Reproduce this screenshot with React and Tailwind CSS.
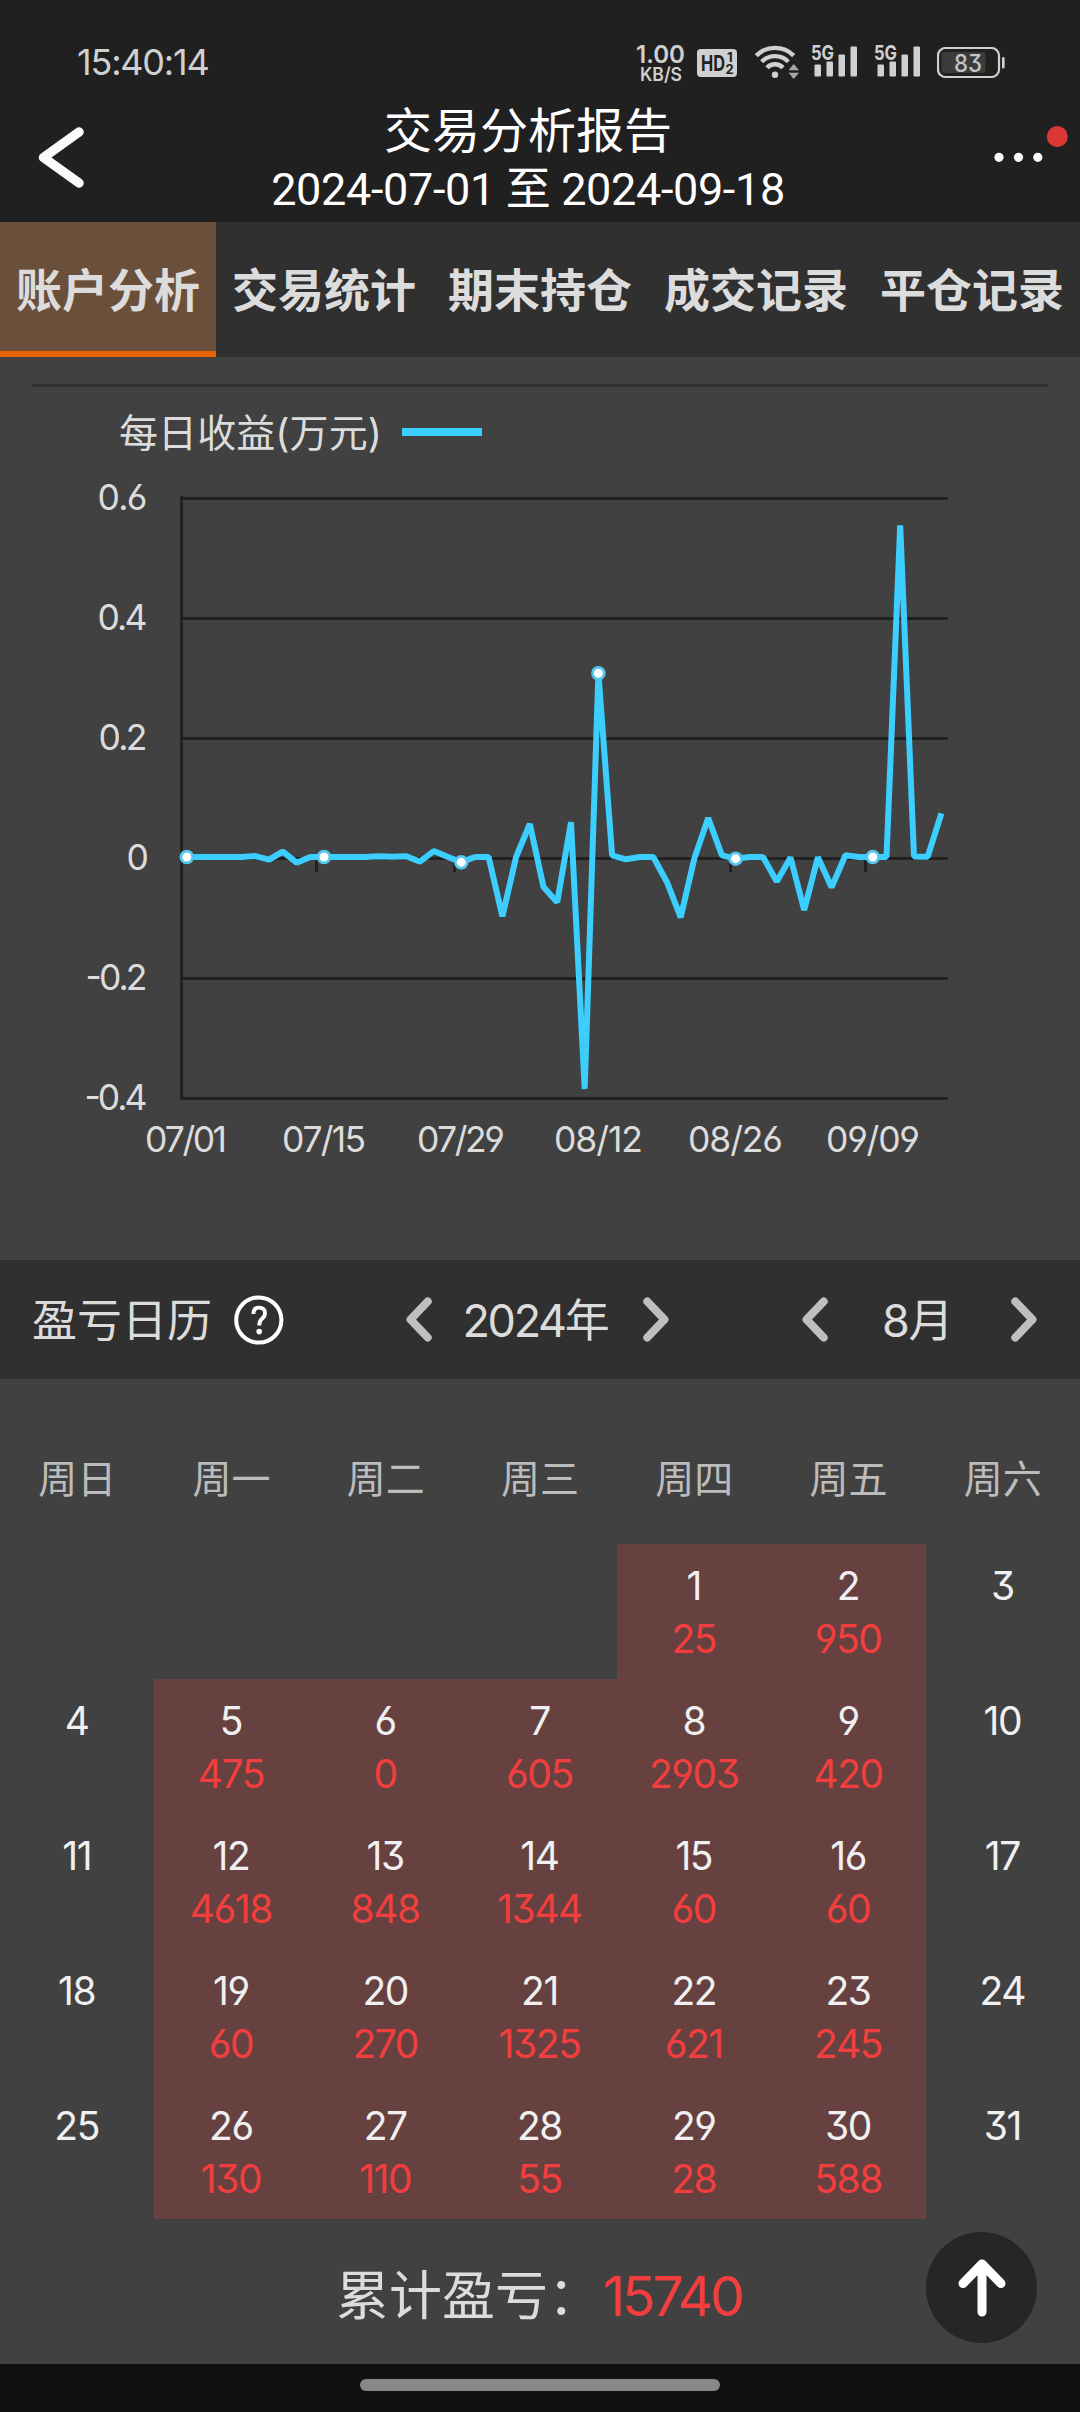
import { Fragment } from "react";
import clsx from "clsx";

const TABS = ["账户分析", "交易统计", "期末持仓", "成交记录", "平仓记录"];
const WEEKDAYS = ["周日", "周一", "周二", "周三", "周四", "周五", "周六"];

// daily profit in yuan, one entry per trading day
const DAILY = [
  0, 0, 0, 0, 0, 15, -45, 90, -95, 0,
  0, 0, 0, 0, 12, 5, 12, -78, 100, 5,
  -89, 0, 0, -990, 0, 550, -500, -755, 580, -3867,
  3062, 28, -39, 0, 0, -420, -1005, -20, 650, 28,
  -28, 0, 0, -410, -10, -885, -5, -505, 28, 0,
  0, 0, 5528, 10, 5, 728,
];

const Y_LABELS = [
  { text: "0.6", w: 50 },
  { text: "0.4", w: 50 },
  { text: "0.2", w: 49 },
  { text: "0", w: 21 },
  { text: "-0.2", w: 62 },
  { text: "-0.4", w: 63 },
];

const X_LABELS = [
  { text: "07/01", x: 145, w: 82 },
  { text: "07/15", x: 282, w: 84 },
  { text: "07/29", x: 417, w: 88 },
  { text: "08/12", x: 554, w: 89 },
  { text: "08/26", x: 688, w: 95 },
  { text: "09/09", x: 826, w: 94 },
];

const MONTH = {
  1: 25, 2: 950, 5: 475, 6: 0, 7: 605, 8: 2903, 9: 420,
  12: 4618, 13: 848, 14: 1344, 15: 60, 16: 60,
  19: 60, 20: 270, 21: 1325, 22: 621, 23: 245,
  26: 130, 27: 110, 28: 55, 29: 28, 30: 588,
};

const px = (i) => 186.8 + i * 13.72;
const py = (v) => 857 - v * 0.06;

function Signal() {
  return (
    <svg width="48" height="36" viewBox="0 0 48 36" className="overflow-visible" fill="#d0d0d0">
      <text x="0" y="17.5" fontSize="20" fontWeight="700" textLength="23" lengthAdjust="spacingAndGlyphs">5G</text>
      <rect x="3.5" y="22.5" width="6.5" height="12" rx="1" />
      <rect x="15.5" y="19.5" width="6.5" height="15" rx="1" />
      <rect x="27.5" y="12.5" width="6.5" height="22" rx="1" />
      <rect x="39.5" y="4.5" width="6.5" height="30" rx="1" />
    </svg>
  );
}

function StatusBar() {
  return (
    <div className="h-[102px] pt-[42px] pl-[77px] pr-[75px] flex items-start justify-between text-[#d0d0d0]">
      <div className="mt-[2px] text-[36px] leading-[36px] tracking-[-1.2px]">15:40:14</div>
      <div className="flex items-start">
        <svg width="50" height="42" viewBox="0 0 50 42" className="overflow-visible" fill="#d0d0d0">
          <text x="0" y="21" fontSize="24" fontWeight="600" textLength="49" lengthAdjust="spacingAndGlyphs">1.00</text>
          <text x="4" y="38.8" fontSize="19" fontWeight="600" textLength="42" lengthAdjust="spacingAndGlyphs">KB/S</text>
        </svg>
        <svg className="ml-[11px] mt-[7px]" width="40" height="28" viewBox="0 0 40 28">
          <rect width="40" height="28" rx="4" fill="#d0d0d0" />
          <g fill="#202020" fontWeight="700">
            <text x="4" y="22" fontSize="22" textLength="24" lengthAdjust="spacingAndGlyphs">HD</text>
            <text x="30" y="13" fontSize="13">1</text>
            <text x="28.5" y="25" fontSize="13">2</text>
          </g>
        </svg>
        <svg className="ml-[17px] mt-[1px]" width="46" height="36" viewBox="0 0 46 36" fill="none" stroke="#d0d0d0" strokeWidth="4.4">
          <path d="M2.3 12.6 A26.5 26.5 0 0 1 39.7 12.6" />
          <path d="M7.7 18.8 A18.5 18.5 0 0 1 34.3 18.8" />
          <path d="M13 24.7 A11 11 0 0 1 29 24.7" />
          <circle cx="21" cy="31.8" r="3.2" fill="#d0d0d0" stroke="none" />
          <path d="M34.5 27.2 L39.7 21 L45 27.2Z M34.5 29.8 L39.7 36 L45 29.8Z" fill="#a8a8a8" stroke="none" />
        </svg>
        <div className="ml-[11px] flex gap-[15px]">
          <Signal />
          <Signal />
        </div>
        <svg className="ml-[15px] mt-[5px]" width="68" height="32" viewBox="0 0 68 32">
          <rect x="1" y="1" width="61" height="29" rx="7.5" fill="none" stroke="#d0d0d0" strokeWidth="2.2" />
          <rect x="4.5" y="5" width="44" height="21" rx="3" fill="#3b3b3b" />
          <rect x="65" y="10" width="2.6" height="11.5" rx="1.3" fill="#d0d0d0" />
          <text x="17" y="24.5" fontSize="24" fontWeight="500" fill="#c4c4c4" textLength="28" lengthAdjust="spacingAndGlyphs">83</text>
        </svg>
      </div>
    </div>
  );
}

function Header() {
  return (
    <div className="h-[120px] flex pl-[38px] pr-[12px] text-white">
      <svg className="mt-[25px]" width="46" height="61" viewBox="0 0 46 61" fill="none" stroke="#fafafa" strokeWidth="9.5" strokeLinecap="round" strokeLinejoin="round">
        <path d="M41 5 L5.5 30.5 L41 56" />
      </svg>
      <div className="w-[888px] flex flex-col items-center">
        <div className="text-[48px] leading-[58px]">交易分析报告</div>
        <div className="pt-px text-[45px] leading-[58px] tracking-[-0.35px] font-['Roboto','Noto_Sans_CJK_SC',sans-serif]">2024-07-01 至 2024-09-18</div>
      </div>
      <svg className="ml-[20px] mt-[20px] shrink-0" width="76" height="50" viewBox="0 0 76 50" fill="#fafafa">
        <circle cx="7" cy="35.3" r="4.6" />
        <circle cx="26.5" cy="35.3" r="4.6" />
        <circle cx="45.8" cy="35.3" r="4.6" />
        <circle cx="65.3" cy="14.5" r="10.5" fill="#dc3636" />
      </svg>
    </div>
  );
}

function ProfitChart() {
  const line = DAILY.map((v, i) => `${px(i).toFixed(1)},${py(v).toFixed(1)}`).join(" ");
  return (
    <svg className="block" width="1080" height="873" viewBox="0 387 1080 873">
      <g className="[font-kerning:none]" fill="#dcdcdc" fontSize="35.5">
        <text x="119" y="447" fontSize="39" textLength="263">每日收益(万元)</text>
        {Y_LABELS.map((l, i) => (
          <text key={l.text} x={147.5 - l.w} y={510 + i * 120} textLength={l.w}>{l.text}</text>
        ))}
        {X_LABELS.map((l) => (
          <text key={l.text} x={l.x} y="1152" textLength={l.w}>{l.text}</text>
        ))}
      </g>
      <rect x="402" y="428" width="80" height="8" fill="#3bceff" />
      <g stroke="#212121" strokeWidth="3">
        {Y_LABELS.map((l, i) => (
          <line key={l.text} x1="180" x2="948" y1={498.5 + i * 120} y2={498.5 + i * 120} />
        ))}
        <line x1="181.5" x2="181.5" y1="496" y2="1100" />
        {[316.5, 454.5, 592, 730.5, 865.5].map((x) => (
          <line key={x} x1={x} x2={x} y1="858" y2="872" />
        ))}
      </g>
      <polyline points={line} fill="none" stroke="#3bceff" strokeWidth="6" strokeLinejoin="bevel" />
      {[0, 10, 20, 30, 40, 50].map((i) => (
        <circle key={i} cx={px(i)} cy={py(DAILY[i])} r="5.9" fill="#fff" stroke="#55c6ee" strokeWidth="2.8" />
      ))}
    </svg>
  );
}

function Chevron({ right, className }) {
  return (
    <svg className={clsx("shrink-0", className)} width="26" height="45" viewBox="0 0 26 45" fill="none" stroke="#bfbfbf" strokeWidth="8" strokeLinecap="round" strokeLinejoin="round">
      <path d={right ? "M4.3 4.5 L21.5 22.5 L4.3 40.5" : "M21.7 4.5 L4.5 22.5 L21.7 40.5"} />
    </svg>
  );
}

function CalendarBar() {
  return (
    <div className="h-[119px] pl-8 bg-[#303030] flex items-center text-[45px] leading-none text-[#dcdcdc]">
      <div className="w-[202px] pt-[2px]">盈亏日历</div>
      <svg width="50" height="50" viewBox="0 0 50 50" fill="none" stroke="#fff" strokeWidth="4">
        <circle cx="24.8" cy="25" r="22.6" />
        <path d="M19.4 19 Q19.4 12.6 25 12.6 Q31 12.6 31 18.2 Q31 21.4 28 23.8 Q25.2 26 25.2 30.4" strokeWidth="3.8" />
        <circle cx="25.2" cy="36.6" r="2.8" fill="#fff" stroke="none" />
      </svg>
      <Chevron className="ml-[122px]" />
      <div className="w-[211px] pt-[2px] pr-[5px] text-center tracking-[-2.3px]">2024年</div>
      <Chevron right />
      <Chevron className="ml-[133px]" />
      <div className="w-[183px] pt-[2px] pr-[5px] text-center tracking-[-1.5px]">8月</div>
      <Chevron right />
    </div>
  );
}

function Day({ day }) {
  const profit = MONTH[day];
  return (
    <div className={clsx("h-[135px] pt-[22px] pr-px flex flex-col items-center gap-[13px] text-[39px] leading-[40px] tracking-[-1.4px]", profit !== undefined && "bg-[#66413f]")}>
      <div className="text-[#f0f0f0]">{day}</div>
      {profit !== undefined && <div className="text-[#f23e3e]">{profit}</div>}
    </div>
  );
}

function Calendar() {
  return (
    <Fragment>
      <div className="h-[165px] pt-[78px] grid grid-cols-7 text-center text-[39px] leading-[44px] text-[#bcbcbc]">
        {WEEKDAYS.map((d) => <div key={d}>{d}</div>)}
      </div>
      <div className="grid grid-cols-7">
        {/* the 1st falls on a Thursday */}
        <div className="col-span-4" />
        {Array.from({ length: 31 }, (_, i) => <Day key={i} day={i + 1} />)}
      </div>
    </Fragment>
  );
}

export default function App() {
  return (
    <div className="relative w-[1080px] h-[2412px] overflow-hidden bg-[#414141] font-normal font-['Inter','Noto_Sans_CJK_SC',sans-serif] [font-feature-settings:'cv03','cv04','cv09']">
      <div className="h-[222px] bg-[#202020]">
        <StatusBar />
        <Header />
      </div>

      <div className="h-[135px] grid grid-cols-5 bg-[#303030]">
        {TABS.map((t, i) => (
          <div key={t} className={clsx("pt-[7px] flex items-center justify-center border-b-[6px] text-[46px] leading-none font-bold text-[#dcdcdc]", i === 0 ? "bg-[#6a503b] border-[#e86400]" : "border-transparent")}>
            {t}
          </div>
        ))}
      </div>

      <div className="h-[30px] mx-8 border-b-[3px] border-[#303030]" />
      <ProfitChart />

      <CalendarBar />
      <Calendar />

      <div className="h-[145px] pt-[9px] pl-[336px] flex items-center text-[53px] leading-none text-[#dcdcdc]">
        <div className="w-[267px] whitespace-nowrap">累计盈亏：</div>
        <div className="text-[55px] tracking-[-3px] text-[#f23e3e]">15740</div>
      </div>

      <div className="h-12 pt-[15px] bg-[#111111]">
        <div className="mx-auto w-[360px] h-3 rounded-full bg-[#888888]" />
      </div>

      <div className="absolute left-[926px] top-[2232px] size-[111px] rounded-full bg-[#262626] grid place-items-center">
        <svg width="48" height="58" viewBox="0 0 48 58" fill="none" stroke="#fff" strokeWidth="9" strokeLinecap="round" strokeLinejoin="round">
          <path d="M24 53 V5.5 M5 24.5 L24 5 L43 24.5" />
        </svg>
      </div>
    </div>
  );
}
